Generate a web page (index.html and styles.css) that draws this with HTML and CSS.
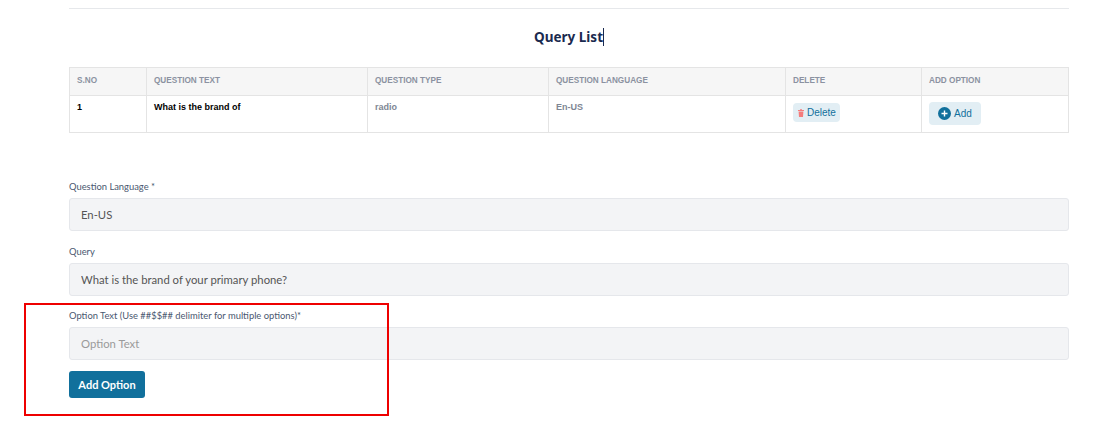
FILE: index.html
```html
<!DOCTYPE html>
<html lang="en">
<head>
    <meta charset="UTF-8">
    <title>Query List</title>
    <link rel="stylesheet" href="styles.css">
</head>
<body>
    <div class="page">
        <hr class="top-line">
        <h2 class="title"><span class="title-text">Query List</span></h2>

        <table class="query-table">
            <colgroup>
                <col class="col-sno">
                <col class="col-text">
                <col class="col-type">
                <col class="col-lang">
                <col class="col-delete">
                <col class="col-add">
            </colgroup>
            <thead>
                <tr>
                    <th>S.NO</th>
                    <th>QUESTION TEXT</th>
                    <th>QUESTION TYPE</th>
                    <th>QUESTION LANGUAGE</th>
                    <th>DELETE</th>
                    <th>ADD OPTION</th>
                </tr>
            </thead>
            <tbody>
                <tr>
                    <td class="strong">1</td>
                    <td class="strong">What is the brand of</td>
                    <td>radio</td>
                    <td>En-US</td>
                    <td>
                        <span class="btn-soft btn-delete">
                            <svg class="trash" width="6" height="8" viewBox="0 0 6 8"><path d="M0 1h2V.3h2V1h2v1H0zM.6 2.500h4.800L5 8H1z" fill="#f47c7c"/></svg>
                            Delete
                        </span>
                    </td>
                    <td>
                        <span class="btn-soft btn-add">
                            <svg width="13" height="13" viewBox="0 0 13 13"><circle cx="6.500" cy="6.500" r="6.500" fill="#11709c"/><path d="M6.500 3.500v6M3.500 6.500h6" stroke="#fff" stroke-width="1.400"/></svg>
                            Add
                        </span>
                    </td>
                </tr>
            </tbody>
        </table>

        <form class="query-form">
            <div class="field">
                <label>Question Language *</label>
                <input class="input" type="text" value="En-US">
            </div>
            <div class="field">
                <label>Query</label>
                <input class="input" type="text" value="What is the brand of your primary phone?">
            </div>
            <div class="field">
                <label>Option Text (Use ##$$## delimiter for multiple options)*</label>
                <input class="input" type="text" placeholder="Option Text">
            </div>
            <button class="btn-primary" type="button">Add Option</button>
        </form>
    </div>

    <div class="red-box"></div>
</body>
</html>
```

FILE: styles.css
```css
body {
    margin: 0;
    background-color: #fff;
    font-family: "Lato", "Noto Sans", sans-serif;
}

.page {
    width: 1000px;
    margin-left: 69px;
    padding-top: 8px;
}

.top-line {
    margin: 0;
    border: none;
    border-top: 1px solid #e6e8eb;
}

.title {
    margin: 19px 0 20px;
    text-align: center;
    font-family: "Noto Sans", sans-serif;
    font-size: 13.500px;
    line-height: 19px;
    font-weight: 700;
    color: #1a2a4f;
}

.title-text {
    border-right: 1px solid #1a2a4f;
}

.query-table {
    width: 999px;
    table-layout: fixed;
    border-collapse: collapse;
    font-family: "Liberation Sans", Arial, sans-serif;
    font-size: 9px;
}

.col-sno { width: 77px; }
.col-text { width: 221px; }
.col-type { width: 181px; }
.col-lang { width: 237px; }
.col-delete { width: 136px; }
.col-add { width: 147px; }

.query-table th,
.query-table td {
    border: 1px solid #e4e4e4;
    padding: 0 7px;
    text-align: left;
}

.query-table th {
    height: 24px;
    padding-bottom: 3px;
    background-color: #f6f6f6;
    color: #8b92a1;
    font-size: 8.200px;
    font-weight: 700;
}

.query-table td {
    height: 30px;
    padding-top: 6px;
    vertical-align: top;
    color: #7e8694;
    font-weight: 700;
}

.query-table td.strong {
    color: #000;
}

.btn-soft {
    display: inline-flex;
    align-items: center;
    vertical-align: top;
    background-color: #e2eef4;
    color: #11709c;
    border-radius: 4px;
    font-weight: 400;
    font-size: 10px;
}

.btn-delete {
    gap: 3px;
    height: 19px;
    margin-top: 1px;
    padding: 0 4px 0 5px;
}

.btn-add {
    gap: 3px;
    height: 23px;
    padding: 0 9px;
}

.query-form {
    margin-top: 47px;
}

.field {
    margin-bottom: 13.500px;
}

.field label {
    display: block;
    margin-bottom: 5px;
    font-size: 9.400px;
    line-height: 13px;
    color: #4a5870;
}

.input {
    display: block;
    box-sizing: border-box;
    width: 100%;
    height: 33px;
    padding: 0 11px;
    background-color: #f3f4f6;
    border: 1px solid #e5e7eb;
    border-radius: 3px;
    font-family: inherit;
    font-size: 11.300px;
    color: #555;
}

.input::placeholder {
    color: #9a9a9a;
}

.btn-primary {
    display: block;
    width: 76px;
    height: 27px;
    margin-top: -3px;
    padding: 0;
    background-color: #11709c;
    color: #fff;
    border: none;
    border-radius: 3px;
    font-family: inherit;
    font-size: 11px;
    font-weight: 700;
}

/* annotation drawn over the form */
.red-box {
    position: absolute;
    left: 24px;
    top: 303px;
    width: 361px;
    height: 109px;
    border: 2px solid #ee0000;
}
```
